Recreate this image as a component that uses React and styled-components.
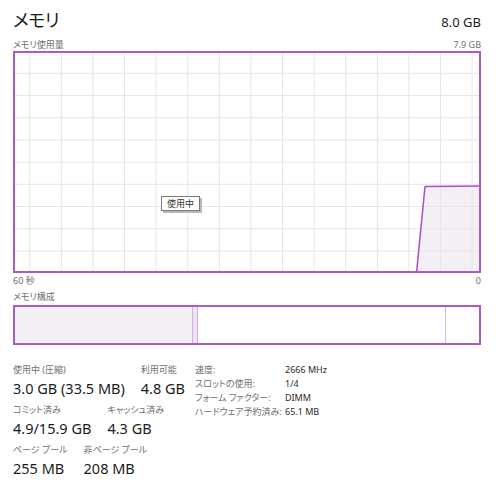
import styled, { createGlobalStyle } from "styled-components";

const GlobalStyle = createGlobalStyle`
  html, body {
    margin: 0;
    padding: 0;
    background: #ffffff;
  }
  body {
    font-family: "Noto Sans", "Noto Sans CJK JP", sans-serif;
    font-feature-settings: "palt";
    color: #1b1b1b;
  }
`;

const purple = "#a85cc8";
const gridColor = "#eedff2";

const Page = styled.div`
  width: 500px;
  height: 498px;
  box-sizing: border-box;
  padding: 8px 19px 0 13px;
  overflow: hidden;
`;

const Header = styled.div`
  display: flex;
  justify-content: space-between;
  align-items: baseline;
  height: 24px;
`;

const Title = styled.div`
  font-size: 18px;
  line-height: 24px;
  letter-spacing: -0.5px;
  font-weight: 400;
`;

const TotalValue = styled.div`
  font-size: 13px;
  line-height: 24px;
`;

const SmallRow = styled.div`
  display: flex;
  justify-content: space-between;
  margin-top: ${(p) => p.top || 0}px;
  height: 12px;
  font-size: 9px;
  line-height: 12px;
  color: #6f6f6f;
  overflow: visible;
`;

const ChartFrame = styled.div`
  position: relative;
  width: 468px;
  height: 222px;
  box-sizing: border-box;
  border: 2px solid ${purple};
`;

const ChartSvg = styled.svg`
  display: block;
`;

const Tooltip = styled.div`
  position: absolute;
  left: 146px;
  top: 143px;
  height: 13px;
  padding: 0 5px;
  border: 1px solid #7a7a7a;
  background: #ffffff;
  font-size: 9px;
  line-height: 13px;
  color: #333;
  box-shadow: 2px 2px 0 #b8b8b8;
`;

const CompositionBar = styled.div`
  display: flex;
  width: 468px;
  height: 40px;
  box-sizing: border-box;
  border: 2px solid ${purple};
  margin-top: 2px;
`;

const Segment = styled.div`
  width: ${(p) => (p.grow ? "auto" : `${p.w}px`)};
  flex: ${(p) => (p.grow ? 1 : "none")};
  box-sizing: border-box;
  background: ${(p) => p.bg || "transparent"};
  border-left: ${(p) => (p.bl ? `1px solid ${p.bl}` : "none")};
  border-right: ${(p) => (p.br ? `1px solid ${p.br}` : "none")};
`;

const Stats = styled.div`
  display: flex;
  margin-top: 19px;
`;

const LeftStats = styled.div`
  width: 182px;
  display: flex;
  flex-direction: column;
  gap: 6px;
`;

const StatRow = styled.div`
  display: flex;
  gap: 16px;
`;

const Stat = styled.div`
  display: flex;
  flex-direction: column;
  gap: 2px;
`;

const StatLabel = styled.div`
  font-size: 9px;
  line-height: 12px;
  height: 12px;
  color: #6f6f6f;
  white-space: nowrap;
`;

const StatValue = styled.div`
  font-size: 14.5px;
  line-height: 20px;
  height: 20px;
  color: #1b1b1b;
  white-space: nowrap;
`;

const Details = styled.div`
  display: grid;
  grid-template-columns: 90px auto;
  grid-auto-rows: 14px;
  font-size: 9px;
  line-height: 14px;
  margin-top: -1px;
`;

const DetailLabel = styled.div`
  color: #6f6f6f;
  white-space: nowrap;
`;

const DetailValue = styled.div`
  color: #2a2a2a;
  white-space: nowrap;
`;

const UsageChart = () => {
  const w = 464;
  const h = 218;
  const vLines = [];
  for (let x = 14.7; x < w; x += 31.6) vLines.push(x);
  const hLines = [];
  for (let y = 20.3; y < h - 2; y += 22.2) hLines.push(y);
  const area = `M401.7,${h} L410,133.5 L440,133.2 L464,133 L464,${h} Z`;
  const line = `M401.7,${h} L410,133.5 L440,133.2 L464,133`;
  return (
    <ChartSvg width={w} height={h} viewBox={`0 0 ${w} ${h}`}>
      <path d={area} fill="#f3f0f4" />
      {vLines.map((x) => (
        <line key={"v" + x} x1={x} x2={x} y1={0} y2={h} stroke={gridColor} strokeWidth="1" />
      ))}
      {hLines.map((y) => (
        <line key={"h" + y} x1={0} x2={w} y1={y} y2={y} stroke={gridColor} strokeWidth="1" />
      ))}
      <path d={line} fill="none" stroke="#a550c8" strokeWidth="1.5" />
    </ChartSvg>
  );
};

const App = () => {
  return (
    <Page>
      <GlobalStyle />
      <Header>
        <Title>メモリ</Title>
        <TotalValue>8.0 GB</TotalValue>
      </Header>
      <SmallRow top={7}>
        <span>メモリ使用量</span>
        <span>7.9 GB</span>
      </SmallRow>
      <ChartFrame>
        <UsageChart />
        <Tooltip>使用中</Tooltip>
      </ChartFrame>
      <SmallRow top={2}>
        <span>60 秒</span>
        <span>0</span>
      </SmallRow>
      <SmallRow top={4}>
        <span>メモリ構成</span>
      </SmallRow>
      <CompositionBar>
        <Segment w={177} bg="#f3f0f4" />
        <Segment w={6} bg="#efe3f3" bl="#d4b0e0" br="#d4b0e0" />
        <Segment w={248} br="#d8b8e3" />
        <Segment grow />
      </CompositionBar>
      <Stats>
        <LeftStats>
          <StatRow>
            <Stat>
              <StatLabel>使用中 (圧縮)</StatLabel>
              <StatValue>3.0 GB (33.5 MB)</StatValue>
            </Stat>
            <Stat>
              <StatLabel>利用可能</StatLabel>
              <StatValue>4.8 GB</StatValue>
            </Stat>
          </StatRow>
          <StatRow>
            <Stat>
              <StatLabel>コミット済み</StatLabel>
              <StatValue>4.9/15.9 GB</StatValue>
            </Stat>
            <Stat>
              <StatLabel>キャッシュ済み</StatLabel>
              <StatValue>4.3 GB</StatValue>
            </Stat>
          </StatRow>
          <StatRow>
            <Stat>
              <StatLabel>ページ プール</StatLabel>
              <StatValue>255 MB</StatValue>
            </Stat>
            <Stat>
              <StatLabel>非ページ プール</StatLabel>
              <StatValue>208 MB</StatValue>
            </Stat>
          </StatRow>
        </LeftStats>
        <Details>
          <DetailLabel>速度:</DetailLabel>
          <DetailValue>2666 MHz</DetailValue>
          <DetailLabel>スロットの使用:</DetailLabel>
          <DetailValue>1/4</DetailValue>
          <DetailLabel>フォーム ファクター:</DetailLabel>
          <DetailValue>DIMM</DetailValue>
          <DetailLabel>ハードウェア予約済み:</DetailLabel>
          <DetailValue>65.1 MB</DetailValue>
        </Details>
      </Stats>
    </Page>
  );
};

export default App;
